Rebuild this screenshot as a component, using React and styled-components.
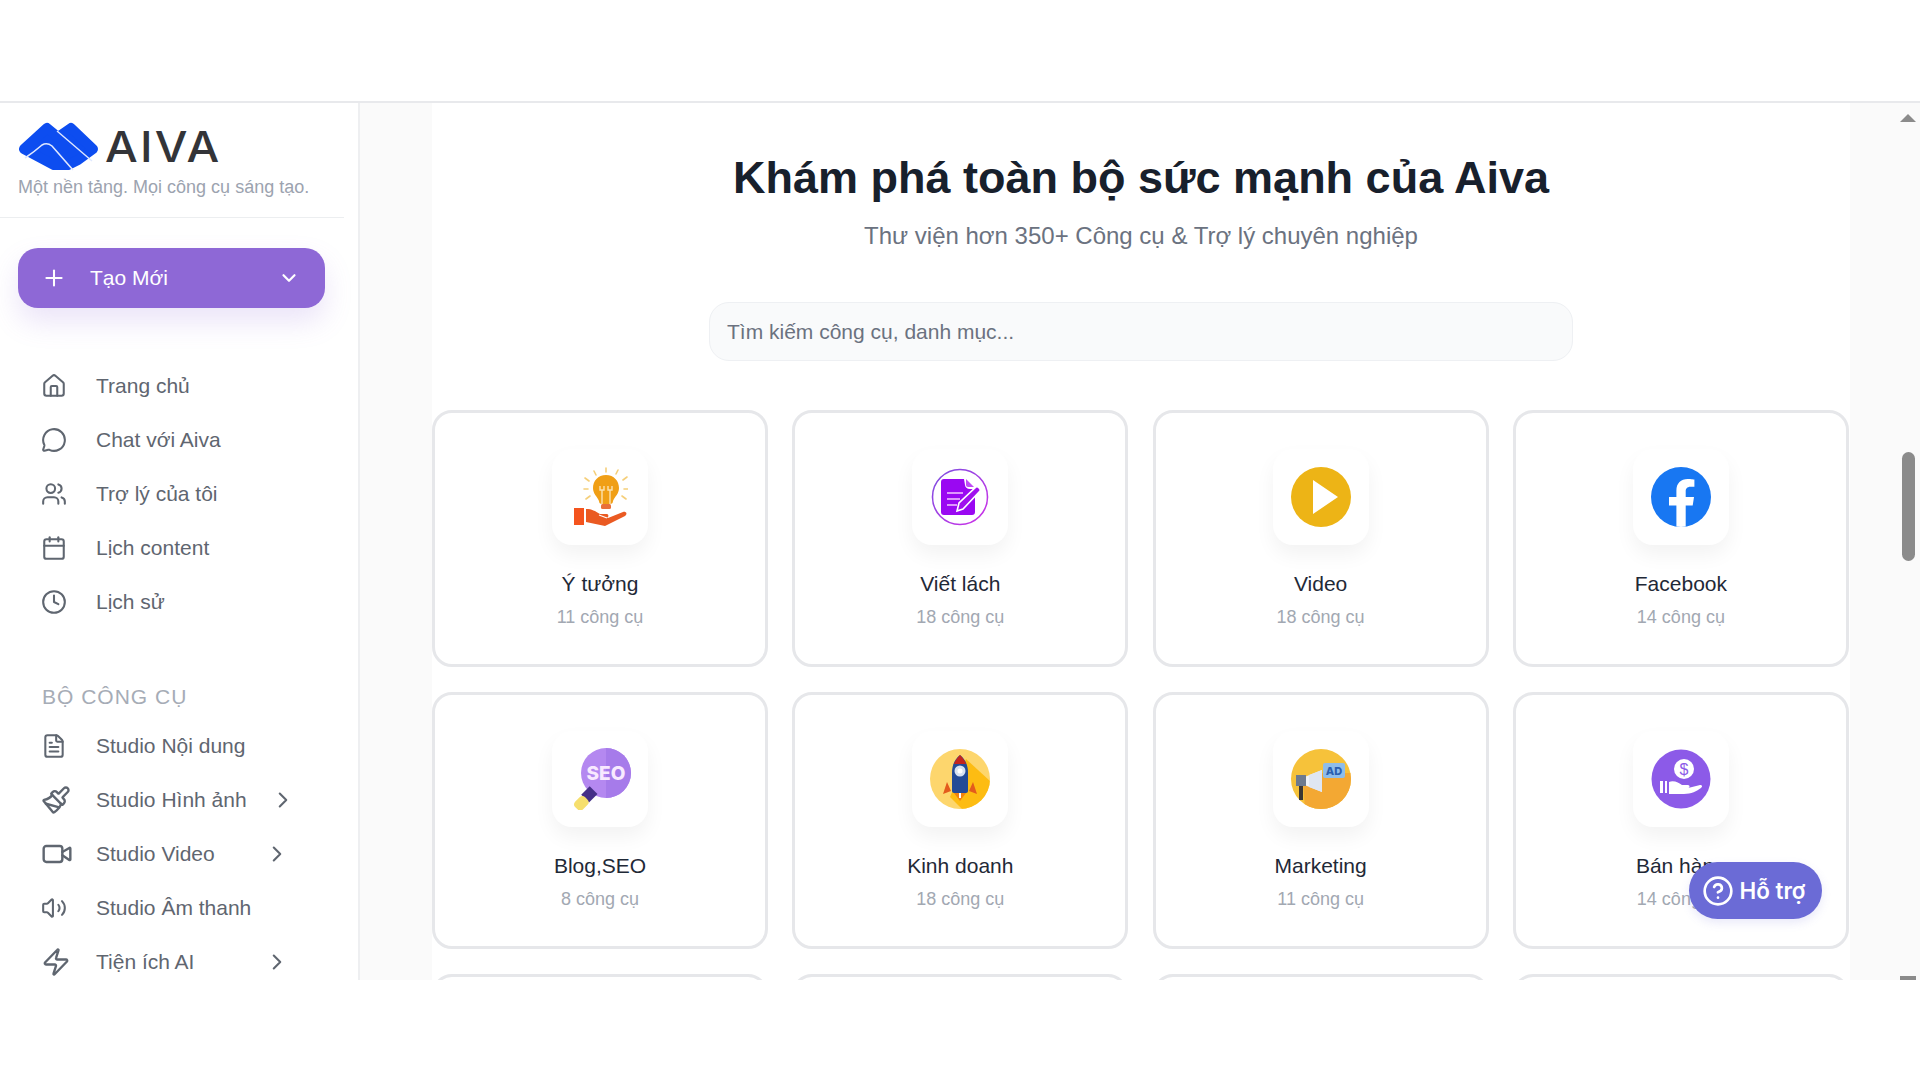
import React from "react";
import styled, { createGlobalStyle } from "styled-components";
import {
  House, MessageCircle, Users, Calendar, Clock, FileText, Paintbrush, Video, Volume2, Zap,
  Plus, ChevronDown, ChevronRight, CircleHelp,
} from "lucide-react";

const Global = createGlobalStyle`
  html, body { margin: 0; padding: 0; background: #fff; overflow: hidden; }
  body { font-family: "Liberation Sans", Arial, sans-serif; }
  * { box-sizing: border-box; }
`;

const Page = styled.div`
  width: 1920px;
  height: 1080px;
  background: #fff;
  display: flex;
  flex-direction: column;
  position: relative;
`;
const TopBar = styled.div`
  height: 103px;
  flex: none;
  border-bottom: 2px solid #e8e9ec;
`;
const Shell = styled.div`
  height: 877px;
  flex: none;
  display: flex;
  overflow: hidden;
`;
const Sidebar = styled.aside`
  width: 360px;
  flex: none;
  background: #fff;
  border-right: 2px solid #eeeff1;
  display: flex;
  flex-direction: column;
`;
const Brand = styled.div`
  width: 344px;
  height: 115px;
  padding: 20px 0 0 18px;
  border-bottom: 1px solid #eceef0;
  flex: none;
`;
const LogoRow = styled.div`
  display: flex;
  align-items: center;
  gap: 5px;
  height: 48px;
`;
const Wordmark = styled.span`
  font-family: "Inter", sans-serif;
  font-weight: 500;
  font-size: 42px;
  line-height: 48px;
  letter-spacing: 2px;
  color: #333438;
  transform: scaleX(1.1);
  transform-origin: left center;
`;
const Tagline = styled.div`
  margin-top: 5px;
  font-size: 18px;
  line-height: 22px;
  color: #9ca3af;
  white-space: nowrap;
`;
const CreateButton = styled.div`
  margin: 30px 0 0 18px;
  width: 307px;
  height: 60px;
  flex: none;
  border-radius: 20px;
  background: #8e68d6;
  color: #fff;
  display: flex;
  align-items: center;
  padding: 0 25px 0 23px;
  font-size: 21px;
  box-shadow: 0 14px 28px rgba(142, 104, 214, 0.18);
`;
const CreateLabel = styled.span`
  margin-left: 23px;
  flex: 1;
`;
const NavList = styled.nav`
  margin-top: ${(p) => p.$top}px;
  display: flex;
  flex-direction: column;
`;
const NavItem = styled.div`
  height: 54px;
  display: flex;
  align-items: center;
  padding-left: 41px;
  font-size: 21px;
  position: relative;
`;
const NavIcon = styled.span`
  width: 55px;
  flex: none;
  display: flex;
  align-items: center;
  color: #5f6670;
`;
const NavLabel = styled.span`
  color: #5f6670;
  white-space: nowrap;
`;
const NavArrow = styled.span`
  margin-left: auto;
  margin-right: ${(p) => p.$right}px;
  display: flex;
  color: #5f6670;
`;
const SectionLabel = styled.div`
  margin: 55px 0 0 42px;
  font-size: 21px;
  line-height: 26px;
  letter-spacing: 1px;
  color: #a6acb6;
`;
const Content = styled.main`
  flex: 1;
  display: flex;
  background: #fafafa;
  padding-left: 72px;
  min-width: 0;
`;
const Panel = styled.section`
  width: 1418px;
  flex: none;
  background: #fff;
  display: flex;
  flex-direction: column;
  align-items: center;
`;
const Title = styled.h1`
  margin: 47px 0 0;
  font-size: 45px;
  line-height: 56px;
  font-weight: 700;
  color: #18202c;
  white-space: nowrap;
`;
const Subtitle = styled.p`
  margin: 16px 0 0;
  font-size: 24px;
  line-height: 28px;
  color: #6b7280;
  white-space: nowrap;
`;
const SearchBox = styled.div`
  margin-top: 52px;
  width: 864px;
  height: 59px;
  flex: none;
  border: 1px solid #eef0f3;
  border-radius: 20px;
  background: #f9fafb;
  display: flex;
  align-items: center;
  padding-left: 17px;
  font-size: 21px;
  color: #6b7280;
`;
const Grid = styled.div`
  margin-top: 49px;
  width: 1418px;
  display: grid;
  grid-template-columns: repeat(4, 336px);
  column-gap: 24.3px;
  row-gap: 25px;
`;
const Card = styled.div`
  height: 257px;
  border: 3px solid #e6e7ea;
  border-radius: 20px;
  background: #fff;
  display: flex;
  flex-direction: column;
  align-items: center;
  padding-top: 36px;
`;
const Tile = styled.div`
  width: 96px;
  height: 96px;
  flex: none;
  border-radius: 20px;
  background: #fff;
  box-shadow: 0 10px 20px rgba(0, 0, 0, 0.05);
  display: flex;
  align-items: center;
  justify-content: center;
`;
const CardName = styled.div`
  margin-top: 26px;
  font-size: 21px;
  line-height: 26px;
  color: #1f2937;
`;
const CardCount = styled.div`
  margin-top: 8px;
  font-size: 18px;
  line-height: 24px;
  color: #a2a8b2;
`;
const ScrollTrack = styled.div`
  flex: 1;
  display: flex;
  flex-direction: column;
  align-items: flex-end;
  padding-right: 4px;
`;
const ArrowUp = styled.div`
  margin: 11px 0 0;
  width: 0;
  height: 0;
  border-left: 8px solid transparent;
  border-right: 8px solid transparent;
  border-bottom: 8px solid #8b8b8b;
  flex: none;
`;
const Thumb = styled.div`
  margin: 330px 1.5px 0 0;
  width: 13px;
  height: 109px;
  border-radius: 7px;
  background: #8b8b8b;
  flex: none;
`;
const ArrowDownStub = styled.div`
  margin: 415px 0 0;
  width: 16px;
  height: 4px;
  background: #8b8b8b;
  flex: none;
`;
const HelpButton = styled.div`
  position: absolute;
  left: 1689px;
  top: 862px;
  width: 133px;
  height: 57px;
  border-radius: 29px;
  background: #6b6bd6;
  color: #fff;
  display: flex;
  align-items: center;
  justify-content: center;
  gap: 6px;
  padding-right: 4px;
  font-size: 22.4px;
  font-weight: 600;
  font-family: "Inter", "Liberation Sans", sans-serif;
  box-shadow: 0 4px 10px rgba(107, 107, 214, 0.15);
`;

const Logo = () => (
  <svg width="82" height="50" viewBox="0 0 82 50">
    <path
      d="M6 27 L29 6 L40 15 L53 6 L75 27 L60 38 L50 43 L36 43 Z"
      fill="#0d4df0"
      stroke="#0d4df0"
      strokeWidth="10"
      strokeLinejoin="round"
    />
    <path d="M39 9 L74 39" stroke="#dfe8ff" strokeWidth="1.4" fill="none" />
    <path d="M7 36 Q16 30 24 23 Q29 20 34 24 L55 48" stroke="#dfe8ff" strokeWidth="1.6" fill="none" />
  </svg>
);

const IdeaIcon = () => (
  <svg width="56" height="62" viewBox="0 0 56 62">
    <g stroke="#f5cf7a" strokeWidth="1.6" strokeLinecap="round">
      <path d="M34 2v4M22 5l2 4M46 4l-2 4M13 12l4 3M55 11l-4 3M12 23h4M52 23h4M14 33l4-3M54 33l-4-3" />
    </g>
    <path d="M34 9c-8 0-13 6-13 13 0 6 4 8 6 13 0 2 1 3 3 3h8c2 0 3-1 3-3 2-5 6-7 6-13 0-7-5-13-13-13Z" fill="#f09f16" />
    <path d="M30 38V24m8 14V24m-10-4v4h4v-4m4 0v4h4v-4" stroke="#fbe2b0" strokeWidth="1.4" fill="none" />
    <rect x="29" y="38" width="10" height="5" rx="1.5" fill="#e96f3a" />
    <rect x="2" y="42" width="10" height="17" fill="#f4541e" />
    <path d="M14 43c6 0 9 2 14 5h7c2 0 2 4-1 4h-7l9 0 15-6c3-1 5 2 2 4L33 60 14 56Z" fill="#ea5a22" />
    <path d="M27 49l8 3" stroke="#fff" strokeWidth="1.2" />
  </svg>
);
const WriteIcon = () => (
  <svg width="60" height="60" viewBox="0 0 60 60">
    <defs>
      <linearGradient id="wr" x1="0" y1="0" x2="1" y2="1">
        <stop offset="0" stopColor="#7a4fe0" />
        <stop offset="1" stopColor="#d02fe8" />
      </linearGradient>
    </defs>
    <circle cx="30" cy="30" r="27.5" fill="#fff" stroke="url(#wr)" strokeWidth="1.6" />
    <path d="M14 12h20l1 6c0 2 2 4 5 4h5v23c0 2-1 3-3 3H14c-2 0-3-1-3-3V15c0-2 1-3 3-3Z" fill="#9a08f2" />
    <path d="M36 12l8 8h-6c-1 0-2-1-2-2Z" fill="#c04df5" />
    <path d="M17 26h16M17 32h13M17 38h10" stroke="#f3c5ff" strokeWidth="1.5" />
    <path d="M27 44l2-8 17-16c2-1 5 2 4 4L33 42Z" fill="#a010ee" stroke="#fff" strokeWidth="1.6" />
  </svg>
);
const PlayIcon = () => (
  <svg width="60" height="60" viewBox="0 0 60 60">
    <circle cx="30" cy="30" r="30" fill="#edb416" />
    <path d="M22 13 L47 30 L22 47 Z" fill="#fff" />
  </svg>
);
const FacebookIcon = () => (
  <svg width="60" height="60" viewBox="0 0 60 60">
    <circle cx="30" cy="30" r="30" fill="#1877f2" />
    <path d="M41.7 38.6 43 30h-8.3v-5.6c0-2.4 1.2-4.6 4.9-4.6h3.8v-7.3s-3.4-.6-6.7-.6c-6.8 0-11.3 4.1-11.3 11.6V30H18v8.6h7.4v21c1.5.2 3 .4 4.6.4s3.2-.1 4.7-.4v-21Z" fill="#fff" />
  </svg>
);
const SeoIcon = () => (
  <svg width="62" height="62" viewBox="0 0 62 62">
    <circle cx="37" cy="25" r="25" fill="#b488f0" />
    <path d="M37 0a25 25 0 0 1 0 50Z" fill="#a67bea" />
    <rect x="14" y="41" width="12" height="11" transform="rotate(-45 20 46)" fill="#452f87" />
    <rect x="5" y="50" width="14" height="11" rx="4" transform="rotate(-45 12 55)" fill="#f6df6e" />
    <text x="37" y="32" textAnchor="middle" fontFamily="Inter, sans-serif" fontSize="19" fontWeight="800" fill="#f8e9ff">SEO</text>
  </svg>
);
const RocketIcon = () => (
  <svg width="60" height="60" viewBox="0 0 60 60">
    <defs>
      <clipPath id="rk"><circle cx="30" cy="30" r="30" /></clipPath>
    </defs>
    <circle cx="30" cy="30" r="30" fill="#fdd66d" />
    <path d="M36 10 L60 32 L60 60 L32 60 L20 48 Z" fill="#fdbc12" clipPath="url(#rk)" />
    <path d="M17 33l-4 12 8-3ZM43 33l4 12-8-3Z" fill="#e35b1d" />
    <path d="M30 52l-6 -8h12Z" fill="#f0820f" />
    <path d="M30 6c-6 5-8 11-8 18v18c0 1 1 2 2 2h12c1 0 2-1 2-2V24c0-7-2-13-8-18Z" fill="#244b96" />
    <path d="M30 6c-3 3-5 6-6 9h12c-1-3-3-6-6-9Z" fill="#c4241d" />
    <circle cx="30" cy="22" r="5.5" fill="#d8e2f0" />
    <circle cx="30" cy="22" r="2.5" fill="#fff" />
    <path d="M30 44v5" stroke="#fff" strokeWidth="2" />
  </svg>
);
const AdIcon = () => (
  <svg width="60" height="60" viewBox="0 0 60 60">
    <defs>
      <clipPath id="ad"><circle cx="30" cy="30" r="30" /></clipPath>
    </defs>
    <circle cx="30" cy="30" r="30" fill="#f6c23a" />
    <path d="M12 32 L32 24 L60 24 L60 60 L14 60 Z" fill="#f3a833" clipPath="url(#ad)" />
    <rect x="32" y="14" width="22" height="15" rx="2" fill="#8ebdea" />
    <text x="43" y="26" textAnchor="middle" fontFamily="Inter, sans-serif" fontSize="11" fontWeight="800" fill="#2a5fb0">AD</text>
    <path d="M11 29 L31 21 V43 L11 35Z" fill="#eef2f8" />
    <path d="M18 26 L31 21 V43 L18 38Z" fill="#dfe6f2" />
    <rect x="5" y="26" width="10" height="11" fill="#6d7a8e" />
    <rect x="8" y="37" width="4" height="14" fill="#3b3633" />
  </svg>
);
const SaleIcon = () => (
  <svg width="60" height="60" viewBox="0 0 60 60">
    <circle cx="30" cy="30" r="29.5" fill="#8c5ae8" />
    <circle cx="33" cy="20" r="10" fill="#fff" />
    <text x="33" y="26" textAnchor="middle" fontFamily="Liberation Sans, sans-serif" fontSize="16" fill="#8c5ae8">$</text>
    <path d="M9 32h3v12H9ZM14 32h2v12h-2Z" fill="#fff" />
    <path d="M18 33c5-2 10 1 13 3h6c2 0 2 3 0 3h-5 5l12-3c2 0 3 1 1 3-4 3-10 6-17 6H18Z" fill="#fff" />
  </svg>
);

const I = { size: 26, strokeWidth: 1.9 };
const mainNav = [
  { label: "Trang chủ", icon: <House {...I} /> },
  { label: "Chat với Aiva", icon: <MessageCircle {...I} /> },
  { label: "Trợ lý của tôi", icon: <Users {...I} /> },
  { label: "Lịch content", icon: <Calendar {...I} /> },
  { label: "Lịch sử", icon: <Clock {...I} /> },
];
const toolNav = [
  { label: "Studio Nội dung", icon: <FileText {...I} /> },
  { label: "Studio Hình ảnh", icon: <Paintbrush size={30} strokeWidth={1.9} />, arrow: 62 },
  { label: "Studio Video", icon: <Video size={32} strokeWidth={1.8} />, arrow: 68 },
  { label: "Studio Âm thanh", icon: <Volume2 {...I} /> },
  { label: "Tiện ích AI", icon: <Zap size={30} strokeWidth={1.9} />, arrow: 68 },
];
const categories = [
  { name: "Ý tưởng", count: "11 công cụ", icon: <IdeaIcon /> },
  { name: "Viết lách", count: "18 công cụ", icon: <WriteIcon /> },
  { name: "Video", count: "18 công cụ", icon: <PlayIcon /> },
  { name: "Facebook", count: "14 công cụ", icon: <FacebookIcon /> },
  { name: "Blog,SEO", count: "8 công cụ", icon: <SeoIcon /> },
  { name: "Kinh doanh", count: "18 công cụ", icon: <RocketIcon /> },
  { name: "Marketing", count: "11 công cụ", icon: <AdIcon /> },
  { name: "Bán hàng", count: "14 công cụ", icon: <SaleIcon /> },
  { name: "", count: "", icon: null },
  { name: "", count: "", icon: null },
  { name: "", count: "", icon: null },
  { name: "", count: "", icon: null },
];

const Nav = ({ items, top }) => (
  <NavList $top={top}>
    {items.map((it) => (
      <NavItem key={it.label}>
        <NavIcon>{it.icon}</NavIcon>
        <NavLabel>{it.label}</NavLabel>
        {it.arrow ? (
          <NavArrow $right={it.arrow}>
            <ChevronRight size={26} strokeWidth={1.9} />
          </NavArrow>
        ) : null}
      </NavItem>
    ))}
  </NavList>
);

export default function App() {
  return (
    <Page>
      <Global />
      <TopBar />
      <Shell>
        <Sidebar>
          <Brand>
            <LogoRow>
              <Logo />
              <Wordmark>AIVA</Wordmark>
            </LogoRow>
            <Tagline>Một nền tảng. Mọi công cụ sáng tạo.</Tagline>
          </Brand>
          <CreateButton>
            <Plus size={26} strokeWidth={1.9} />
            <CreateLabel>Tạo Mới</CreateLabel>
            <ChevronDown size={22} strokeWidth={2.4} />
          </CreateButton>
          <Nav items={mainNav} top={51} />
          <SectionLabel>BỘ CÔNG CỤ</SectionLabel>
          <Nav items={toolNav} top={9} />
        </Sidebar>
        <Content>
          <Panel>
            <Title>Khám phá toàn bộ sức mạnh của Aiva</Title>
            <Subtitle>Thư viện hơn 350+ Công cụ &amp; Trợ lý chuyên nghiệp</Subtitle>
            <SearchBox>Tìm kiếm công cụ, danh mục...</SearchBox>
            <Grid>
              {categories.map((c, i) => (
                <Card key={i}>
                  {c.icon ? <Tile>{c.icon}</Tile> : null}
                  {c.name ? <CardName>{c.name}</CardName> : null}
                  {c.count ? <CardCount>{c.count}</CardCount> : null}
                </Card>
              ))}
            </Grid>
          </Panel>
          <ScrollTrack>
            <ArrowUp />
            <Thumb />
            <ArrowDownStub />
          </ScrollTrack>
        </Content>
      </Shell>
      <HelpButton>
        <CircleHelp size={32} strokeWidth={2} />
        Hỗ trợ
      </HelpButton>
    </Page>
  );
}
